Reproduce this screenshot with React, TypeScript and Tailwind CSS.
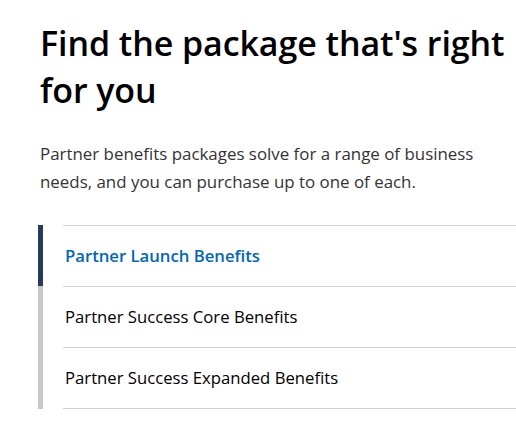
export default function App() {
  const items = [
    { label: "Partner Launch Benefits", active: true },
    { label: "Partner Success Core Benefits", active: false },
    { label: "Partner Success Expanded Benefits", active: false },
  ];
  return (
    <div className="w-[516px] h-[445px] bg-white overflow-hidden pl-[40px] pt-[20px]" style={{ fontFamily: '"Open Sans", "Noto Sans", sans-serif' }}>
      <h1 className="text-[34px] leading-[47px] font-semibold text-black tracking-[-0.08px]">
        Find the package that's right for you
      </h1>
      <p className="mt-[26px] text-[16.9px] leading-[28px] text-[#333333] pr-[30px]">
        Partner benefits packages solve for a range of business needs, and you can purchase up to one of each.
      </p>
      <div className="mt-[29px] flex -ml-[2px]">
        <div className="w-[5px] flex flex-col">
          <div className="h-[61px] bg-[#243a5e]" />
          <div className="flex-1 bg-[#c8c8c8]" />
        </div>
        <ul className="ml-[20px] flex-1 border-t border-[#d2d2d2]">
          {items.map((it) => (
            <li
              key={it.label}
              className={`h-[61px] flex items-center pl-[2px] border-b border-[#d2d2d2] text-[16.7px] ${it.active ? "text-[#0067b8] font-semibold" : "text-black"}`}
            >
              {it.label}
            </li>
          ))}
        </ul>
      </div>
    </div>
  );
}
